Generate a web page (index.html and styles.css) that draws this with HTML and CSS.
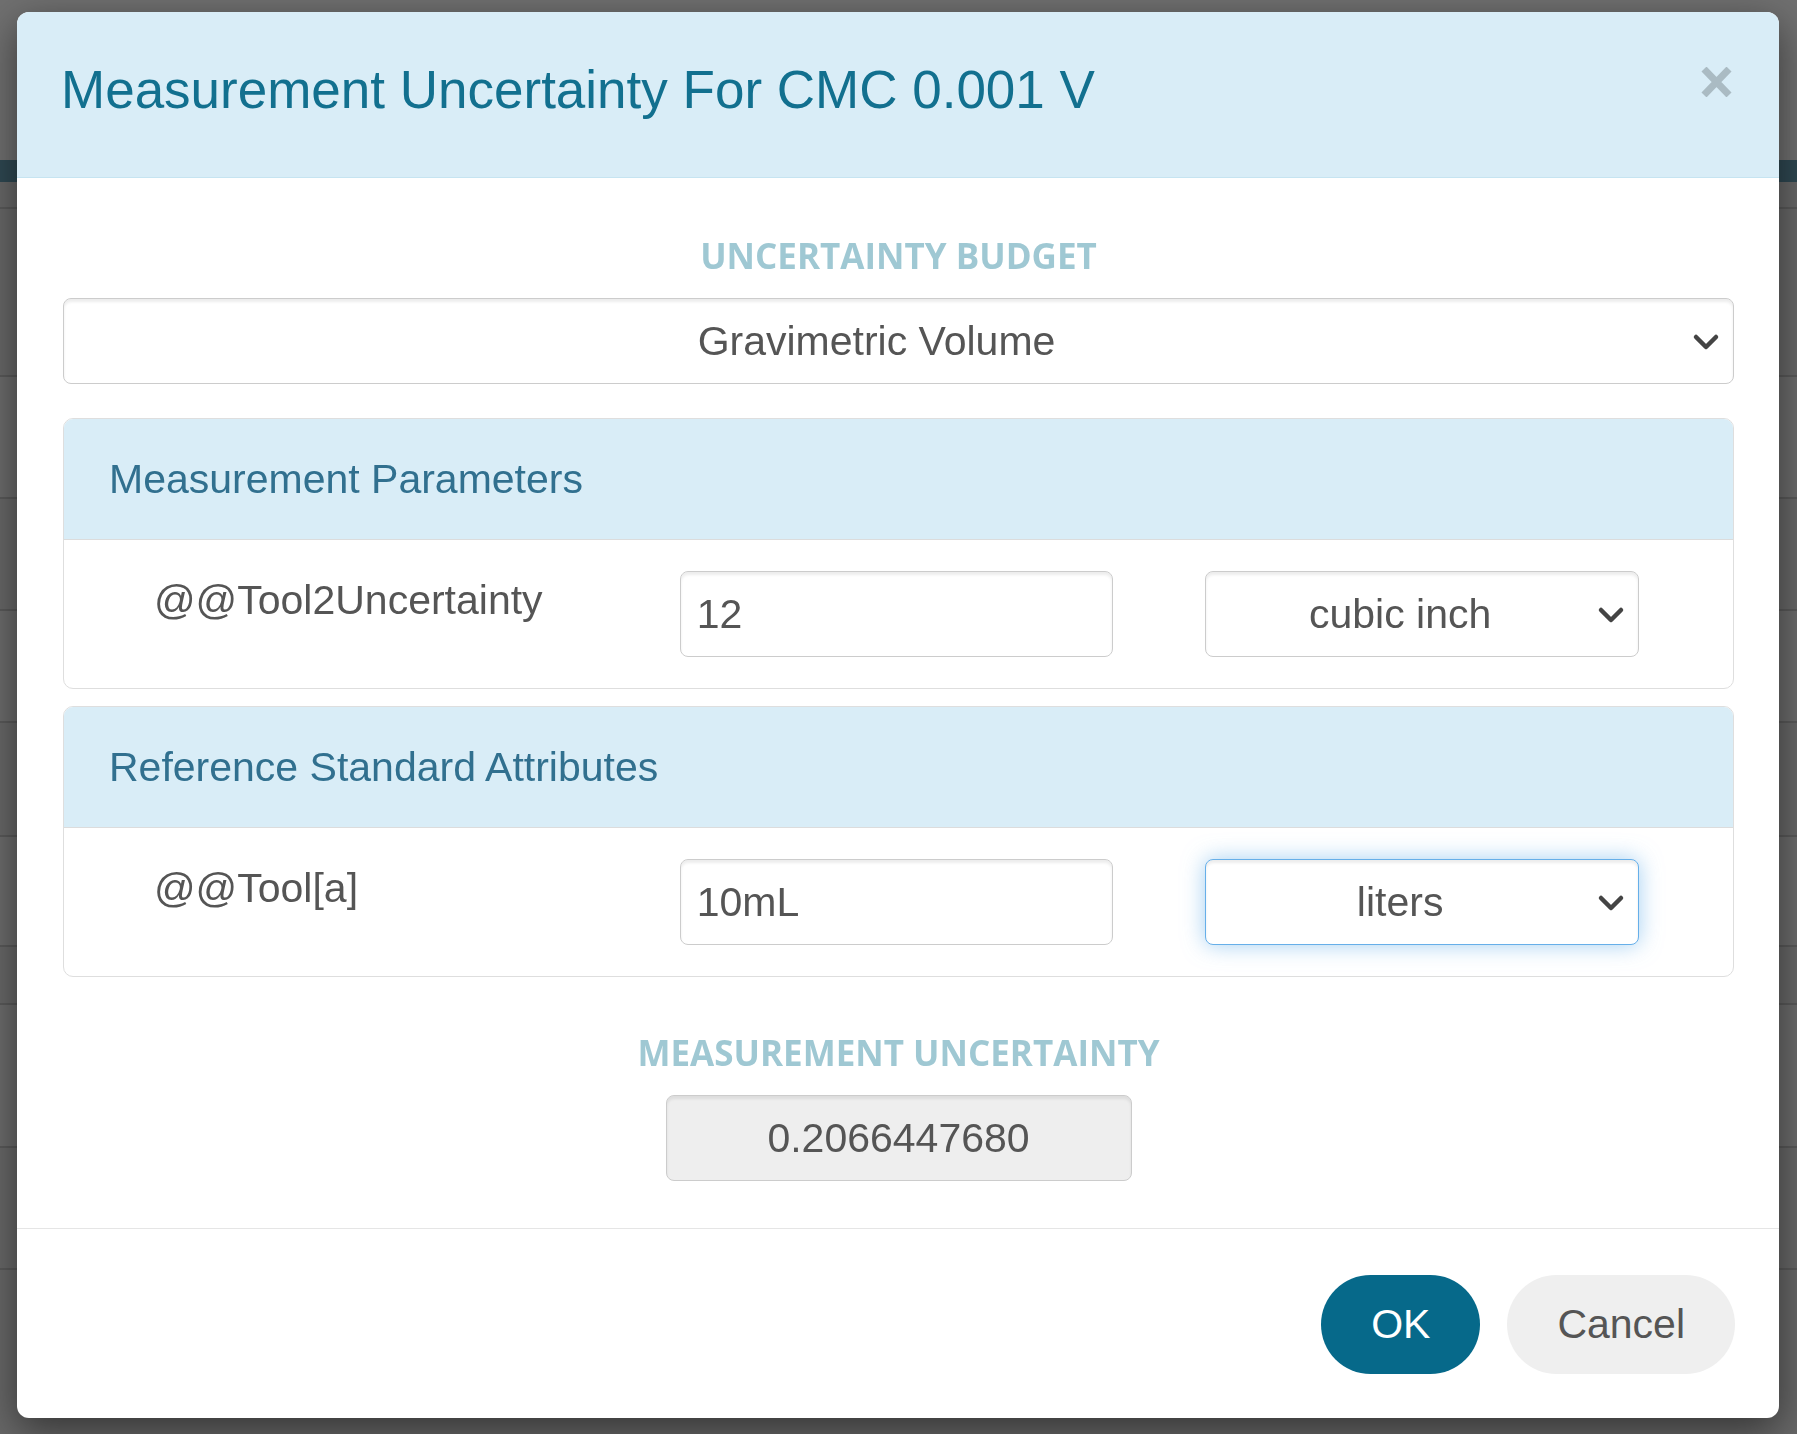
FILE: index.html
```html
<!DOCTYPE html>
<html lang="en">
<head>
    <meta charset="UTF-8">
    <meta name="viewport" content="width=device-width, initial-scale=1.0">
    <title>Measurement Uncertainty</title>
    <link rel="stylesheet" href="styles.css">
</head>
<body>
    <!-- page behind the modal -->
    <div class="page">
        <div class="page-top"></div>
        <div class="page-nav"></div>
        <div class="page-row" style="height: 27px"></div>
        <div class="page-row" style="height: 168px"></div>
        <div class="page-row alt" style="height: 122px"></div>
        <div class="page-row" style="height: 112px"></div>
        <div class="page-row alt" style="height: 112px"></div>
        <div class="page-row" style="height: 114px"></div>
        <div class="page-row alt" style="height: 110px"></div>
        <div class="page-row" style="height: 58px"></div>
        <div class="page-row alt" style="height: 143px"></div>
        <div class="page-row" style="height: 122px"></div>
    </div>

    <div class="overlay">
        <div class="modal">
            <div class="modal-header">
                <h4 class="modal-title">Measurement Uncertainty For CMC 0.001 V</h4>
                <button class="close" type="button" aria-label="Close">
                    <svg width="31" height="30" viewBox="0 0 31 30">
                        <path d="M3 2 L28 28 M28 2 L3 28" stroke="#aabbc3" stroke-width="7" fill="none"/>
                    </svg>
                </button>
            </div>

            <div class="modal-body">
                <div class="section-label">Uncertainty Budget</div>
                <div class="select-wrap budget">
                    <select class="form-control">
                        <option>Gravimetric Volume</option>
                    </select>
                    <svg class="caret" width="28" height="18" viewBox="0 0 28 18">
                        <path d="M4 4 L14 14 L24 4" stroke="#444" stroke-width="4.5" fill="none" stroke-linecap="round" stroke-linejoin="round"/>
                    </svg>
                </div>

                <!-- Measurement Parameters -->
                <div class="panel">
                    <div class="panel-heading">Measurement Parameters</div>
                    <div class="panel-body">
                        <label class="param-label">@@Tool2Uncertainty</label>
                        <input class="form-control" type="text" value="12">
                        <div class="select-wrap">
                            <select class="form-control">
                                <option>cubic inch</option>
                            </select>
                            <svg class="caret" width="28" height="18" viewBox="0 0 28 18">
                                <path d="M4 4 L14 14 L24 4" stroke="#444" stroke-width="4.5" fill="none" stroke-linecap="round" stroke-linejoin="round"/>
                            </svg>
                        </div>
                    </div>
                </div>

                <!-- Reference Standard Attributes -->
                <div class="panel">
                    <div class="panel-heading">Reference Standard Attributes</div>
                    <div class="panel-body">
                        <label class="param-label">@@Tool[a]</label>
                        <input class="form-control" type="text" value="10mL">
                        <div class="select-wrap">
                            <select class="form-control focused">
                                <option>liters</option>
                            </select>
                            <svg class="caret" width="28" height="18" viewBox="0 0 28 18">
                                <path d="M4 4 L14 14 L24 4" stroke="#444" stroke-width="4.5" fill="none" stroke-linecap="round" stroke-linejoin="round"/>
                            </svg>
                        </div>
                    </div>
                </div>

                <div class="section-label result-label">Measurement Uncertainty</div>
                <input class="form-control result" type="text" value="0.2066447680" readonly>
            </div>

            <div class="modal-footer">
                <button class="btn btn-ok" type="button">OK</button>
                <button class="btn btn-cancel" type="button">Cancel</button>
            </div>
        </div>
    </div>
</body>
</html>
```

FILE: styles.css
```css
body {
    margin: 0;
    font-family: "Liberation Sans", Arial, sans-serif;
    font-size: 41px;
    color: #555;
    background: #686868;
}

/* page behind the backdrop */
.page-top {
    height: 160px;
    background: #707070;
}
.page-nav {
    height: 22px;
    background: #2f4852;
}
.page-row {
    background: #686868;
    border-bottom: 2px solid #5a5a5a;
    box-sizing: border-box;
}
.page-row.alt {
    background: #6c6c6c;
}

.overlay {
    position: fixed;
    top: 0;
    left: 0;
    right: 0;
    bottom: 0;
    padding: 12px 18px 16px 17px;
}

.modal {
    height: 1406px;
    background: #fff;
    border-radius: 12px;
    box-shadow: 0 12px 40px rgba(0, 0, 0, 0.5);
    display: flex;
    flex-direction: column;
}

/* header */
.modal-header {
    background: #d9edf7;
    border-bottom: 1px solid #c6e4f1;
    border-radius: 12px 12px 0 0;
    padding: 40px 47px 49px 44px;
    display: flex;
    justify-content: space-between;
    align-items: flex-start;
}
.modal-title {
    margin: 0;
    font-size: 53px;
    font-weight: normal;
    line-height: 76px;
    color: #12708f;
}
.close {
    margin-top: 15px;
    padding: 0;
    border: 0;
    background: none;
    line-height: 0;
}

/* body */
.modal-body {
    padding: 57px 45px 47px 46px;
}
.section-label {
    font-family: "Open Sans", sans-serif;
    font-weight: 700;
    font-size: 35px;
    line-height: 42px;
    text-transform: uppercase;
    text-align: center;
    color: #9fc8d3;
    margin-bottom: 21px;
}
.result-label {
    margin-top: 55px;
}

.form-control {
    display: block;
    width: 100%;
    height: 86px;
    box-sizing: border-box;
    padding: 0 16px;
    font-family: "Liberation Sans", Arial, sans-serif;
    font-size: 41px;
    color: #555;
    background: #fff;
    border: 1px solid #ccc;
    border-radius: 8px;
    box-shadow: inset 0 3px 3px rgba(0, 0, 0, 0.075);
    outline: none;
}

select.form-control {
    -webkit-appearance: none;
    appearance: none;
    text-align: center;
    text-align-last: center;
    padding: 0 56px 0 12px;
}
select.form-control.focused {
    border-color: #66afe9;
    box-shadow: inset 0 3px 3px rgba(0, 0, 0, 0.075), 0 0 22px rgba(102, 175, 233, 0.6);
}

.select-wrap {
    position: relative;
}
.caret {
    position: absolute;
    right: 14px;
    top: 50%;
    margin-top: -8px;
}
.budget {
    margin-bottom: 34px;
}

/* panels */
.panel {
    border: 1px solid #dedede;
    border-radius: 10px;
    margin-bottom: 17px;
    overflow: hidden;
}
.panel-heading {
    background: #d9edf7;
    border-bottom: 1px solid #dcdcdc;
    padding: 31px 45px;
    line-height: 58px;
    color: #31708f;
}
.panel-body {
    padding: 31px 94px 31px 90px;
    display: grid;
    grid-template-columns: 1fr 1fr 1fr;
    gap: 92px;
    align-items: start;
}
.param-label {
    line-height: 58px;
    color: #555;
}

.result {
    width: 466px;
    margin: 0 auto;
    text-align: center;
    background: #eee;
}

/* footer */
.modal-footer {
    border-top: 1px solid #e5e5e5;
    padding: 46px 44px 44px;
    display: flex;
    justify-content: flex-end;
    gap: 27px;
}
.btn {
    height: 99px;
    padding: 0 50px;
    border: 0;
    border-radius: 50px;
    font-family: "Liberation Sans", Arial, sans-serif;
    font-size: 41px;
}
.btn-ok {
    background: #06698a;
    color: #fff;
}
.btn-cancel {
    background: #efefef;
    color: #555;
}
```
